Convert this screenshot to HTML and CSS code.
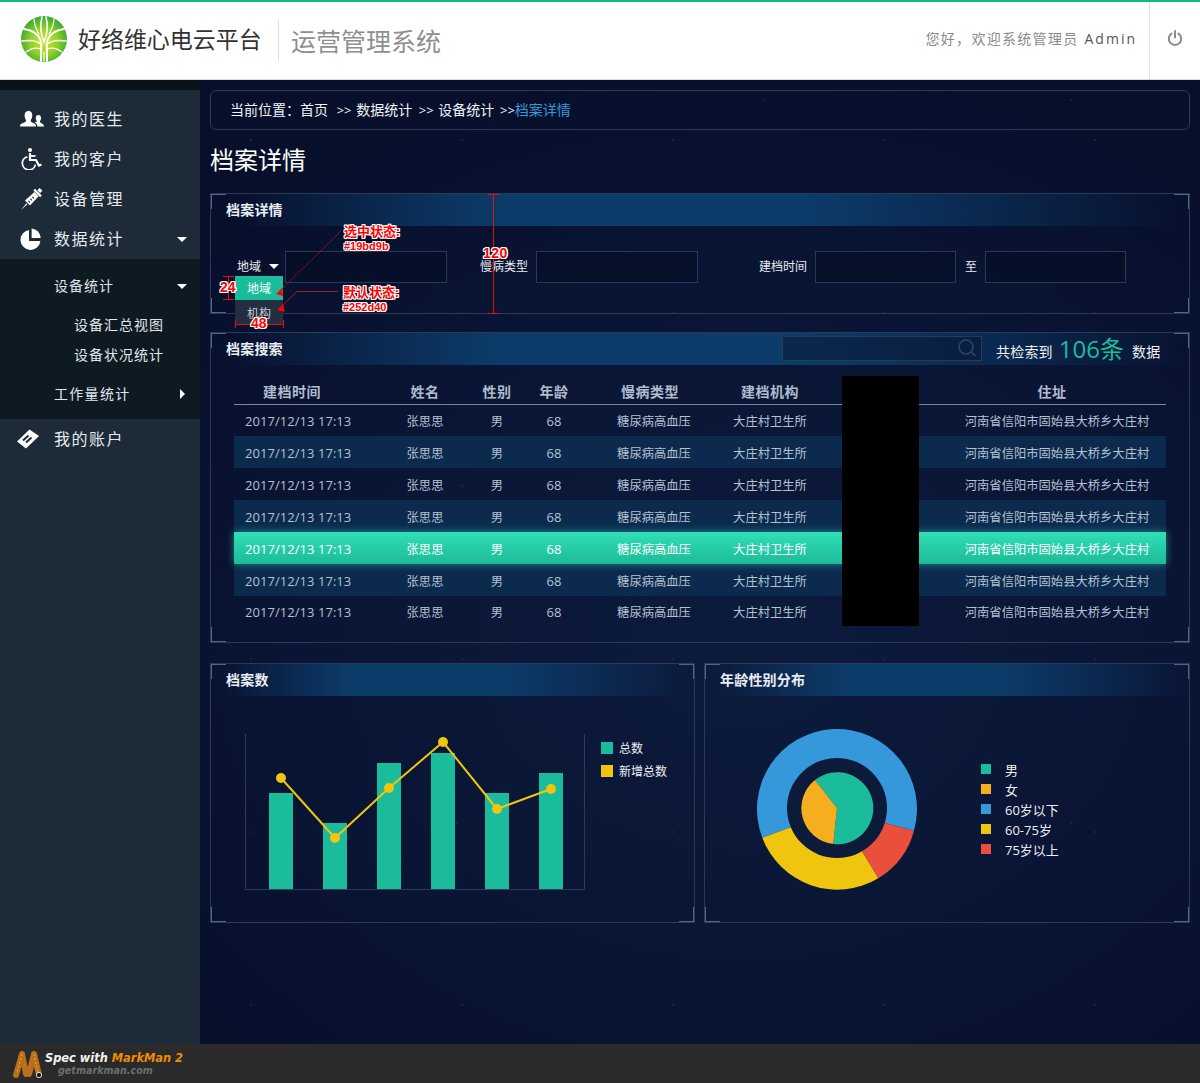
FILE: index.html
```html
<!DOCTYPE html>
<html lang="zh-CN">
<head>
  <meta charset="UTF-8" />
  <title>档案详情</title>
  <link rel="stylesheet" href="styles.css">
</head>
<body>

  <header class="topbar">
    <svg class="logo" viewBox="0 0 46 46" width="46" height="46">
      <defs>
        <radialGradient id="logoFill" cx="50%" cy="55%" r="55%">
          <stop offset="0" stop-color="#d6e81e"/>
          <stop offset="0.55" stop-color="#8fd02c"/>
          <stop offset="1" stop-color="#36a62f"/>
        </radialGradient>
      </defs>
      <circle cx="23" cy="23" r="23" fill="url(#logoFill)"/>
      <g fill="none" stroke="#fff" stroke-linecap="round">
        <path d="M20 45 C20 34 21 28 19 23 C16 16 9 14 3 13" stroke-width="2"/>
        <path d="M26 45 C26 34 25 28 27 23 C30 16 37 14 43 13" stroke-width="2"/>
        <path d="M21 29 C16 24 8 24 1 25" stroke-width="1.6"/>
        <path d="M25 29 C30 24 38 24 45 25" stroke-width="1.6"/>
        <path d="M20 33 C15 31 9 33 5 36" stroke-width="1.3"/>
        <path d="M26 33 C31 31 37 33 41 36" stroke-width="1.3"/>
        <path d="M23 26 C19 17 19 9 21 1" stroke-width="1.6"/>
        <path d="M23 26 C27 17 27 9 25 1" stroke-width="1.6"/>
        <path d="M18 18 C14 11 13 7 13 3" stroke-width="1.2"/>
        <path d="M28 18 C32 11 33 7 33 3" stroke-width="1.2"/>
        <path d="M23 36 L23 45" stroke-width="1.2"/>
      </g>
    </svg>
    <span class="brand">好络维心电云平台</span>
    <span class="system">运营管理系统</span>
    <div class="welcome">您好，欢迎系统管理员<b>Admin</b></div>
    <div class="power">
      <svg viewBox="0 0 16 16" width="16" height="16" fill="none" stroke="#8c8c8c" stroke-width="2" stroke-linecap="round">
        <path d="M4.6 3.6 A6.2 6.2 0 1 0 11.4 3.6"/>
        <path d="M8 1 V7.5"/>
      </svg>
    </div>
  </header>

  <div class="layout">
    <aside class="sidebar">
      <div class="dots"></div>
      <nav class="nav">
        <a class="nav-item">
          <svg class="nav-icon doctor" viewBox="0 0 24 18" width="24" height="18" fill="#fff">
            <path d="M8.5 0 C11.4 0 12.6 2.4 12.2 5.4 C12 7.2 11 8.5 10.6 9.4 C10.6 11 12.6 11.7 14.4 12.6 C15.5 13.1 16 14 16 15.6 L0 15.6 C0 14 .6 13.1 1.8 12.6 C3.6 11.7 6.2 11 6.2 9.4 C5.7 8.5 4.9 7.2 4.7 5.4 C4.3 2.4 5.6 0 8.5 0 Z"/>
            <path d="M18.4 4 C20.4 4 21.2 5.6 21 7.6 C20.8 9 20.2 9.8 19.9 10.6 C19.9 11.8 21.4 12.2 22.6 12.9 C23.5 13.4 24 14.2 24 15.6 L17.4 15.6 C17.4 14 16.8 12.6 15.2 11.7 L14.6 11.4 C15.8 11 16.9 10.9 16.9 10.6 C16.6 9.8 16 9 15.8 7.6 C15.6 5.6 16.4 4 18.4 4 Z"/>
          </svg>
          我的医生
        </a>
        <a class="nav-item">
          <svg class="nav-icon chair" viewBox="0 0 24 24" width="24" height="24" fill="none" stroke="#fff" stroke-width="2">
            <circle cx="11" cy="4" r="2.1" fill="#fff" stroke="none"/>
            <path d="M11 7 V14 H17 L20 19.5 L22.5 18.4" stroke-width="2.2"/>
            <path d="M11 10 H16.5" stroke-width="1.8"/>
            <path d="M8.4 10.8 A6.6 6.6 0 1 0 16.4 18.6" stroke-width="1.8"/>
          </svg>
          我的客户
        </a>
        <a class="nav-item">
          <svg class="nav-icon" viewBox="0 0 24 24" width="24" height="24" fill="#fff">
            <path d="M2 23 L7.4 16.2 L8.4 17.2 Z"/>
            <path d="M6 13.6 L15.4 5 L19.6 9.2 L11 18.6 Z"/>
            <path d="M14.4 3.4 L16 1.8 L22.8 8.6 L21.2 10.2 Z"/>
            <path d="M18.4 3.2 L20.6 1 L23.4 3.8 L21.2 6 Z"/>
            <path d="M9.4 13.8 L11 15.4 M11.4 11.8 L13 13.4 M13.4 9.8 L15 11.4" stroke="#1c2b37" stroke-width="1.2"/>
          </svg>
          设备管理
        </a>
        <a class="nav-item">
          <svg class="nav-icon" viewBox="0 0 24 24" width="24" height="24" fill="#fff">
            <path d="M10 3 A10 10 0 1 0 21.4 14 L10 14 Z"/>
            <path d="M12.6 1.6 A10 10 0 0 1 21.8 11 L12.6 11 Z"/>
          </svg>
          数据统计
          <i class="caret-down"></i>
        </a>
        <div class="subnav">
          <a class="sub-item first">设备统计<i class="caret-down"></i></a>
          <a class="leaf">设备汇总视图</a>
          <a class="leaf">设备状况统计</a>
          <a class="sub-item last">工作量统计<i class="caret-right"></i></a>
        </div>
        <a class="nav-item">
          <svg class="nav-icon ticket" viewBox="0 0 24 24" width="24" height="24">
            <path d="M1 14.5 L13.5 2.5 L23 9 L10 21.5 Z" fill="#fff"/>
            <path d="M7 13.5 L12.5 8.5 M10 15.5 L15.5 10.5" stroke="#1c2b37" stroke-width="2"/>
          </svg>
          我的账户
        </a>
      </nav>
    </aside>

    <main class="content">
      <div class="crumbs">
        当前位置：首页 <span class="sep first-sep">&gt;&gt;</span> 数据统计 <span class="sep">&gt;&gt;</span> 设备统计 <span class="sep last-sep">&gt;&gt;</span><span class="here">档案详情</span>
      </div>
      <h1 class="page-title">档案详情</h1>

      <section class="panel panel-filter">
        <h2 class="panel-head">档案详情</h2>
        <div class="filter-row">
          <div class="select">
            地域<i class="caret-down small"></i>
            <ul class="options">
              <li class="on">地域</li>
              <li>机构</li>
            </ul>
          </div>
          <input class="field w162" type="text">
          <label class="field-label gap-a">慢病类型</label>
          <input class="field w162" type="text">
          <label class="field-label gap-b">建档时间</label>
          <input class="field w141" type="text">
          <span class="to">至</span>
          <input class="field w141" type="text">
        </div>
      </section>

      <section class="panel panel-search">
        <div class="panel-head">
          <h2>档案搜索</h2>
          <div class="search-box">
            <svg viewBox="0 0 20 20" width="20" height="20" fill="none" stroke="#2f4566" stroke-width="1.6">
              <circle cx="9" cy="9" r="7"/>
              <path d="M14 14 L18.5 18"/>
            </svg>
          </div>
          <div class="hits">共检索到<strong>106条</strong>数据</div>
        </div>
        <table class="records">
          <colgroup>
            <col class="c-date"><col class="c-name"><col class="c-sex"><col class="c-age">
            <col class="c-type"><col class="c-org"><col class="c-id"><col class="c-addr">
          </colgroup>
          <thead>
            <tr>
              <th class="date">建档时间</th><th>姓名</th><th>性别</th><th>年龄</th>
              <th class="nudge">慢病类型</th><th>建档机构</th><th></th><th class="nudge-addr">住址</th>
            </tr>
          </thead>
          <tbody>
            <tr><td class="date">2017/12/13 17:13</td><td>张思思</td><td>男</td><td class="age">68</td><td>糖尿病高血压</td><td>大庄村卫生所</td><td></td><td class="addr">河南省信阳市固始县大桥乡大庄村</td></tr>
            <tr><td class="date">2017/12/13 17:13</td><td>张思思</td><td>男</td><td class="age">68</td><td>糖尿病高血压</td><td>大庄村卫生所</td><td></td><td class="addr">河南省信阳市固始县大桥乡大庄村</td></tr>
            <tr><td class="date">2017/12/13 17:13</td><td>张思思</td><td>男</td><td class="age">68</td><td>糖尿病高血压</td><td>大庄村卫生所</td><td></td><td class="addr">河南省信阳市固始县大桥乡大庄村</td></tr>
            <tr><td class="date">2017/12/13 17:13</td><td>张思思</td><td>男</td><td class="age">68</td><td>糖尿病高血压</td><td>大庄村卫生所</td><td></td><td class="addr">河南省信阳市固始县大桥乡大庄村</td></tr>
            <tr class="active"><td class="date">2017/12/13 17:13</td><td>张思思</td><td>男</td><td class="age">68</td><td>糖尿病高血压</td><td>大庄村卫生所</td><td></td><td class="addr">河南省信阳市固始县大桥乡大庄村</td></tr>
            <tr><td class="date">2017/12/13 17:13</td><td>张思思</td><td>男</td><td class="age">68</td><td>糖尿病高血压</td><td>大庄村卫生所</td><td></td><td class="addr">河南省信阳市固始县大桥乡大庄村</td></tr>
            <tr class="short"><td class="date">2017/12/13 17:13</td><td>张思思</td><td>男</td><td class="age">68</td><td>糖尿病高血压</td><td>大庄村卫生所</td><td></td><td class="addr">河南省信阳市固始县大桥乡大庄村</td></tr>
          </tbody>
        </table>
        <div class="redact"></div>
      </section>

      <div class="charts">
        <section class="panel panel-chart">
          <h2 class="panel-head">档案数</h2>
          <div class="chart-body bars">
            <svg class="bar-chart" viewBox="244 733 342 157" width="342" height="157">
              <path d="M245.5 734 V889.5 H584.5 V734" fill="none" stroke="#2b3c58" stroke-width="1"/>
              <g fill="#1abc9c">
                <rect x="269" y="793" width="24" height="96"/>
                <rect x="323" y="823" width="24" height="66"/>
                <rect x="377" y="763" width="24" height="126"/>
                <rect x="431" y="753" width="24" height="136"/>
                <rect x="485" y="793" width="24" height="96"/>
                <rect x="539" y="773" width="24" height="116"/>
              </g>
              <polyline points="281,778 335,838 389,788 443,742 497,809 551,789" fill="none" stroke="#f1c40f" stroke-width="2"/>
              <g fill="#f1c40f">
                <circle cx="281" cy="778" r="5"/>
                <circle cx="335" cy="838" r="5"/>
                <circle cx="389" cy="788" r="5"/>
                <circle cx="443" cy="742" r="5"/>
                <circle cx="497" cy="809" r="5"/>
                <circle cx="551" cy="789" r="5"/>
              </g>
            </svg>
            <ul class="legend legend-bars">
              <li><i class="swatch teal"></i>总数</li>
              <li><i class="swatch yellow"></i>新增总数</li>
            </ul>
          </div>
        </section>

        <section class="panel panel-chart panel-wide">
          <h2 class="panel-head">年龄性别分布</h2>
          <div class="chart-body donut">
            <svg class="donut-chart" viewBox="755 728 164 164" width="164" height="164">
              <path d="M837 810 L762.3 837.7 A80 80 0 1 1 914 830.7 Z" fill="#3498db"/>
              <path d="M837 810 L914 830.7 A80 80 0 0 1 878.3 878.3 Z" fill="#ea4f3c"/>
              <path d="M837 810 L878.3 878.3 A80 80 0 0 1 762.3 837.7 Z" fill="#efc510"/>
              <circle cx="837" cy="808" r="50" fill="#0c1b3a"/>
              <path d="M837 808 L815 780 A36 36 0 1 1 833.3 844 Z" fill="#1abc9c"/>
              <path d="M837 808 L833.3 844 A36 36 0 0 1 815 780 Z" fill="#f5ae20"/>
            </svg>
            <ul class="legend legend-donut">
              <li><i class="swatch teal"></i>男</li>
              <li><i class="swatch orange"></i>女</li>
              <li><i class="swatch blue"></i>60岁以下</li>
              <li><i class="swatch gold"></i>60-75岁</li>
              <li><i class="swatch red"></i>75岁以上</li>
            </ul>
          </div>
        </section>
      </div>
    </main>
  </div>

  <footer class="markman">
    <svg class="mm-logo" viewBox="0 0 32 28" width="32" height="28">
      <path d="M4 25 L10 4 M14 24 L10 4 M17 24 L22 4 M27 25 L22 4" stroke="#b8701a" stroke-width="6" stroke-linecap="round" fill="none"/>
      <path d="M10 4 L5 23 M22 4 L26 23" stroke="#e7a040" stroke-width="1.2" stroke-dasharray="2 2" fill="none"/>
      <circle cx="27" cy="25" r="2.6" fill="#111" stroke="#ddd" stroke-width="1"/>
    </svg>
    <div class="mm-text">
      <div class="mm-line">Spec with <em>MarkMan 2</em></div>
      <div class="mm-site">getmarkman.com</div>
    </div>
  </footer>

  <!-- MarkMan measurement marks, floating on top of the design -->
  <div class="marks">
    <svg class="mark-lines" viewBox="0 0 1200 1083" width="1200" height="1083" fill="none" stroke="#e01010">
      <path d="M493.5 194 V313 M488 194.5 H499 M488 313.5 H499" stroke-width="1"/>
      <path d="M228.5 276 V299 M223 276.5 H234 M223 299.5 H234"/>
      <path d="M235.5 320 V328 M283.5 320 V328 M235 324.5 H284"/>
      <path d="M341 231 L280 291" stroke="#a01c28" stroke-dasharray="2 1"/>
      <path d="M338 291.5 H297 L281 307" stroke="#a01c28"/>
      <path d="M276 294 L282 288 L283 296 Z M277 310 L283 304 L285 312 Z" fill="#f00" stroke="none"/>
    </svg>
    <span class="mark cn m-sel">选中状态:</span>
    <span class="mark hex m-selhex">#19bd9b</span>
    <span class="mark cn m-def">默认状态:</span>
    <span class="mark hex m-defhex">#252d40</span>
    <span class="mark num m-120">120</span>
    <span class="mark num m-24">24</span>
    <span class="mark num m-48">48</span>
  </div>

</body>
</html>
```

FILE: styles.css
```css
* { box-sizing: border-box; }
html, body { margin: 0; padding: 0; }
body {
  position: relative;
  display: flex;
  flex-direction: column;
  min-height: 100vh;
  font-family: "Open Sans", "Noto Sans CJK SC", sans-serif;
  font-size: 13px;
  color: #fff;
  background-color: #070f2b;
}
ul { list-style: none; margin: 0; padding: 0; }
h1, h2 { margin: 0; font-weight: normal; }

/* top bar */
.topbar {
  display: flex;
  align-items: center;
  height: 80px;
  flex: none;
  background: #fff;
  border-top: 2px solid #13b97c;
  border-bottom: 1px solid #dcdcdc;
}
.logo { margin-left: 21px; margin-top: -3px; }
.brand {
  margin-left: 11px;
  font-size: 23px;
  color: #333;
  width: 201px;
  height: 41px;
  line-height: 38px;
  border-right: 1px solid #ddd;
  letter-spacing: -.05px;
}
.system {
  margin-left: 12px;
  font-size: 25px;
  color: #8f8f8f;
  margin-top: -1px;
}
.welcome {
  margin-left: auto;
  font-size: 14px;
  color: #8a8a8a;
  letter-spacing: 1.3px;
  margin-top: -5px;
}
.welcome b {
  font-weight: normal;
  color: #555;
  margin-left: 6px;
  letter-spacing: 2px;
}
.power {
  display: flex;
  align-items: center;
  justify-content: center;
  width: 51px;
  height: 77px;
  margin-left: 12px;
  border-left: 1px solid #e3e3e3;
  padding-bottom: 5px;
}

.layout {
  flex: 1;
  display: flex;
  background:
    radial-gradient(1px 1px at 40px 60px, #1f2f52 50%, transparent 100%) 0 0 / 211px 173px,
    radial-gradient(1px 1px at 150px 20px, #1c2b4c 50%, transparent 100%) 0 0 / 307px 241px,
    radial-gradient(ellipse 60% 60% at 62% 58%, #0c1b3c 0%, #0a1535 60%, #070f2b 100%),
    linear-gradient(#0a0f27, #061033);
}

/* sidebar */
.sidebar {
  width: 200px;
  flex: none;
  background: #1c2b37;
}
.dots {
  height: 10px;
  background-color: #161f29;
  background-image: radial-gradient(#0b1118 50%, transparent 55%);
  background-size: 2px 2px;
}
.nav { padding-top: 9px; }
.nav-item {
  display: flex;
  align-items: center;
  position: relative;
  height: 40px;
  padding: 0 0 2px 54px;
  font-size: 16px;
  letter-spacing: 1.5px;
  color: #e6eaee;
}
.nav-icon { position: absolute; left: 19px; top: 8px; }
.nav-item .doctor { top: 12px; left: 20px; }
.nav-item .chair { top: 7px; }
.nav-item .ticket { left: 16px; }
.subnav {
  background: #0e1a22;
  height: 160px;
  padding-top: 7px;
}
.subnav a { display: flex; align-items: center; position: relative; color: #e2e6ea; letter-spacing: 1px; font-size: 14px; padding-bottom: 2px; }
.sub-item { height: 40px; padding-left: 54px; }
.leaf { height: 30px; padding-left: 74px; }
.sub-item.first { margin-bottom: 4px; }
.sub-item.last { margin-top: 4px; letter-spacing: 1.3px; }
.caret-down {
  position: absolute;
  right: 13px;
  top: 50%;
  margin-top: -2px;
  border-style: solid;
  border-width: 5px 5px 0;
  border-color: #fff transparent transparent;
}
.caret-right {
  position: absolute;
  right: 15px;
  top: 50%;
  margin-top: -5px;
  border-style: solid;
  border-width: 5px 0 5px 5px;
  border-color: transparent transparent transparent #fff;
}

/* main area */
.content {
  flex: 1;
  padding: 10px 10px 0;
  min-width: 0;
}
.crumbs {
  height: 40px;
  line-height: 38px;
  padding-left: 19px;
  font-size: 14px;
  color: #f0f3f7;
  border: 1px solid #2b3a55;
  border-radius: 6px;
  white-space: nowrap;
}
.crumbs .sep { font-size: 13px; margin: 0 1px 0 3px; }
.crumbs .first-sep { margin-left: 5px; }
.crumbs .last-sep { margin-right: 0; margin-left: 2px; }
.crumbs .here { color: #3498db; }
.page-title {
  height: 63px;
  line-height: 60px;
  font-size: 24px;
  color: #fff;
}

/* panels with bracket corners */
.panel {
  position: relative;
  border: 1px solid #2a3a58;
  background-image:
    linear-gradient(#4f6788, #4f6788), linear-gradient(#4f6788, #4f6788),
    linear-gradient(#4f6788, #4f6788), linear-gradient(#4f6788, #4f6788),
    linear-gradient(#4f6788, #4f6788), linear-gradient(#4f6788, #4f6788),
    linear-gradient(#4f6788, #4f6788), linear-gradient(#4f6788, #4f6788);
  background-repeat: no-repeat;
  background-origin: border-box;
  background-size:
    16px 2px, 2px 16px, 16px 2px, 2px 16px,
    16px 2px, 2px 16px, 16px 2px, 2px 16px;
  background-position:
    0 0, 0 0, 100% 0, 100% 0,
    0 100%, 0 100%, 100% 100%, 100% 100%;
}
.panel-head {
  display: flex;
  align-items: center;
  height: 32px;
  padding: 0 0 2px 15px;
  font-size: 14px;
  font-weight: bold;
  color: #e9eef4;
  letter-spacing: .2px;
  background: linear-gradient(90deg, rgba(12,60,106,0) 2%, #0c3c6a 30%, #0c3c6a 60%, rgba(12,60,106,0) 100%);
}
.panel-head h2 { font-size: 14px; font-weight: bold; }

/* filter */
.panel-filter { height: 121px; }
.filter-row {
  display: flex;
  align-items: center;
  height: 32px;
  margin-top: 25px;
  padding-left: 25px;
  font-size: 12px;
  color: #e8ecf1;
}
.select {
  position: relative;
  width: 49px;
  height: 32px;
  padding-left: 1px;
  line-height: 32px;
}
.caret-down.small { right: 6px; margin-top: -3px; }
.options {
  position: absolute;
  left: -1px;
  top: 25px;
  width: 48px;
  z-index: 2;
}
.options li {
  height: 24px;
  line-height: 26px;
  text-align: center;
  background: #252d40;
  color: #c6ccd4;
}
.options li:last-child { height: 25px; line-height: 28px; }
.options li.on { background: #19bd9b; color: #fff; }
.field {
  height: 32px;
  padding: 0;
  border: 1px solid #2a3a52;
  background: rgba(5, 12, 34, .45);
}
.w162 { width: 162px; }
.w141 { width: 141px; }
.field-label { width: 48px; margin-right: 8px; padding-bottom: 3px; white-space: nowrap; }
.gap-a { margin-left: 33px; }
.gap-b { margin-left: 61px; }
.to { margin: 0 7px 0 9px; padding-bottom: 2px; width: 13px; }

/* search panel */
.panel-search { height: 311px; margin-top: 18px; }
.search-box {
  display: flex;
  align-items: center;
  justify-content: flex-end;
  width: 200px;
  height: 25px;
  margin-left: auto;
  padding-right: 4px;
  border: 1px solid #2a3a52;
  background: rgba(8, 20, 50, .5);
}
.hits {
  display: flex;
  align-items: center;
  width: 207px;
  padding: 6px 0 0 14px;
  font-size: 14px;
  font-weight: normal;
  color: #eef1f5;
  white-space: nowrap;
}
.hits strong {
  font-size: 24px;
  font-weight: normal;
  color: #19bd9b;
  margin: -8px 8px 0 6px;
  letter-spacing: 0;
}

.records {
  width: 932px;
  margin: 10px 0 0 23px;
  border-collapse: collapse;
  table-layout: fixed;
}
.c-date { width: 151px; }
.c-name { width: 80px; }
.c-sex { width: 64px; }
.c-age { width: 50px; }
.c-type { width: 150px; }
.c-org { width: 82px; }
.c-id { width: 139px; }
.c-addr { width: 216px; }
.records th {
  height: 29px;
  font-size: 14px;
  font-weight: bold;
  letter-spacing: .5px;
  text-align: center;
  color: #aebccd;
  border-bottom: 1px solid #7a8799;
  white-space: nowrap;
  padding: 4px 0 0;
}
.records th.date { text-align: left; padding-left: 29px; }
.records th.nudge { padding-right: 8px; }
.records th.nudge-addr { padding-right: 12px; }
.records td {
  height: 32px;
  font-size: 12.3px;
  text-align: center;
  color: #b4c1d1;
  white-space: nowrap;
  padding: 2px 0 0;
}
.records td.date { font-size: 13px; text-align: left; padding: 2px 0 0 11px; letter-spacing: .05px; }
.records td.age { font-size: 13px; padding: 2px 0 0; }
.records td.addr { padding-right: 2px; }
.records tbody tr:nth-child(even) { background: #0c2a4e; }
.records tbody tr.short td { height: 31px; padding-top: 0; }
.records tbody tr.active {
  background: linear-gradient(#30dfb6, #1cbb97);
  box-shadow: 0 0 8px rgba(47, 220, 178, .55);
  position: relative;
}
.records tbody tr.active td { color: #fff; }
.redact {
  position: absolute;
  left: 631px;
  top: 43px;
  width: 77px;
  height: 250px;
  background: #000;
}

/* charts */
.charts {
  display: flex;
  gap: 9px;
  margin-top: 20px;
}
.panel-chart { width: 485px; height: 260px; }
.panel-wide { width: 486px; }
.chart-body { display: flex; align-items: flex-start; }
.bar-chart { margin: 37px 0 0 33px; flex: none; }
.legend { font-size: 12px; color: #eef1f5; }
.legend li { display: flex; align-items: center; white-space: nowrap; }
.swatch { display: block; flex: none; }
.legend-bars { margin: 40px 0 0 15px; }
.legend-bars li { height: 23px; }
.legend-bars .swatch { width: 12px; height: 12px; margin-right: 6px; }
.donut-chart { margin: 32px 0 0 50px; flex: none; }
.legend-donut { margin: 63px 0 0 62px; font-size: 13px; }
.legend-donut li { height: 20px; }
.legend-donut .swatch { width: 10px; height: 10px; margin-right: 14px; }
.teal { background: #1abc9c; }
.yellow { background: #f1c40f; }
.orange { background: #f5ae20; }
.blue { background: #3498db; }
.gold { background: #efc510; }
.red { background: #ea4f3c; }

/* markman strip */
.markman {
  display: flex;
  align-items: center;
  height: 39px;
  flex: none;
  padding-left: 12px;
  background: #2a2a2a;
}
.mm-text { margin-left: 1px; font-family: "DejaVu Sans", sans-serif; font-style: italic; font-weight: bold; }
.mm-line { font-size: 11.4px; line-height: 14px; color: #f2f2f2; padding-top: 1px; }
.mm-line em { color: #f08c00; }
.mm-site { font-size: 9.6px; line-height: 12px; color: #6e6e6e; margin-left: 13px; }

/* measurement marks */
.marks {
  position: absolute;
  left: 0;
  top: 0;
  width: 1200px;
  height: 1083px;
  pointer-events: none;
  z-index: 5;
}
.mark-lines { position: absolute; left: 0; top: 0; }
.mark {
  position: absolute;
  color: #f00;
  font-weight: bold;
  white-space: nowrap;
  text-shadow: 1px 0 0 #fff, -1px 0 0 #fff, 0 1px 0 #fff, 0 -1px 0 #fff, 1px 1px 0 #fff, -1px -1px 0 #fff, 1px -1px 0 #fff, -1px 1px 0 #fff;
}
.mark.cn { font-size: 13px; line-height: 16px; }
.mark.hex { font-family: "Liberation Sans", sans-serif; font-size: 11px; line-height: 14px; }
.mark.num { font-family: "Liberation Sans", sans-serif; font-size: 14px; line-height: 16px; }
.m-sel { left: 344px; top: 223px; }
.m-selhex { left: 344px; top: 239px; }
.m-def { left: 343px; top: 284px; }
.m-defhex { left: 343px; top: 300px; }
.m-120 { left: 483px; top: 245px; letter-spacing: .5px; }
.m-24 { left: 220px; top: 279px; }
.m-48 { left: 251px; top: 315px; }
```
